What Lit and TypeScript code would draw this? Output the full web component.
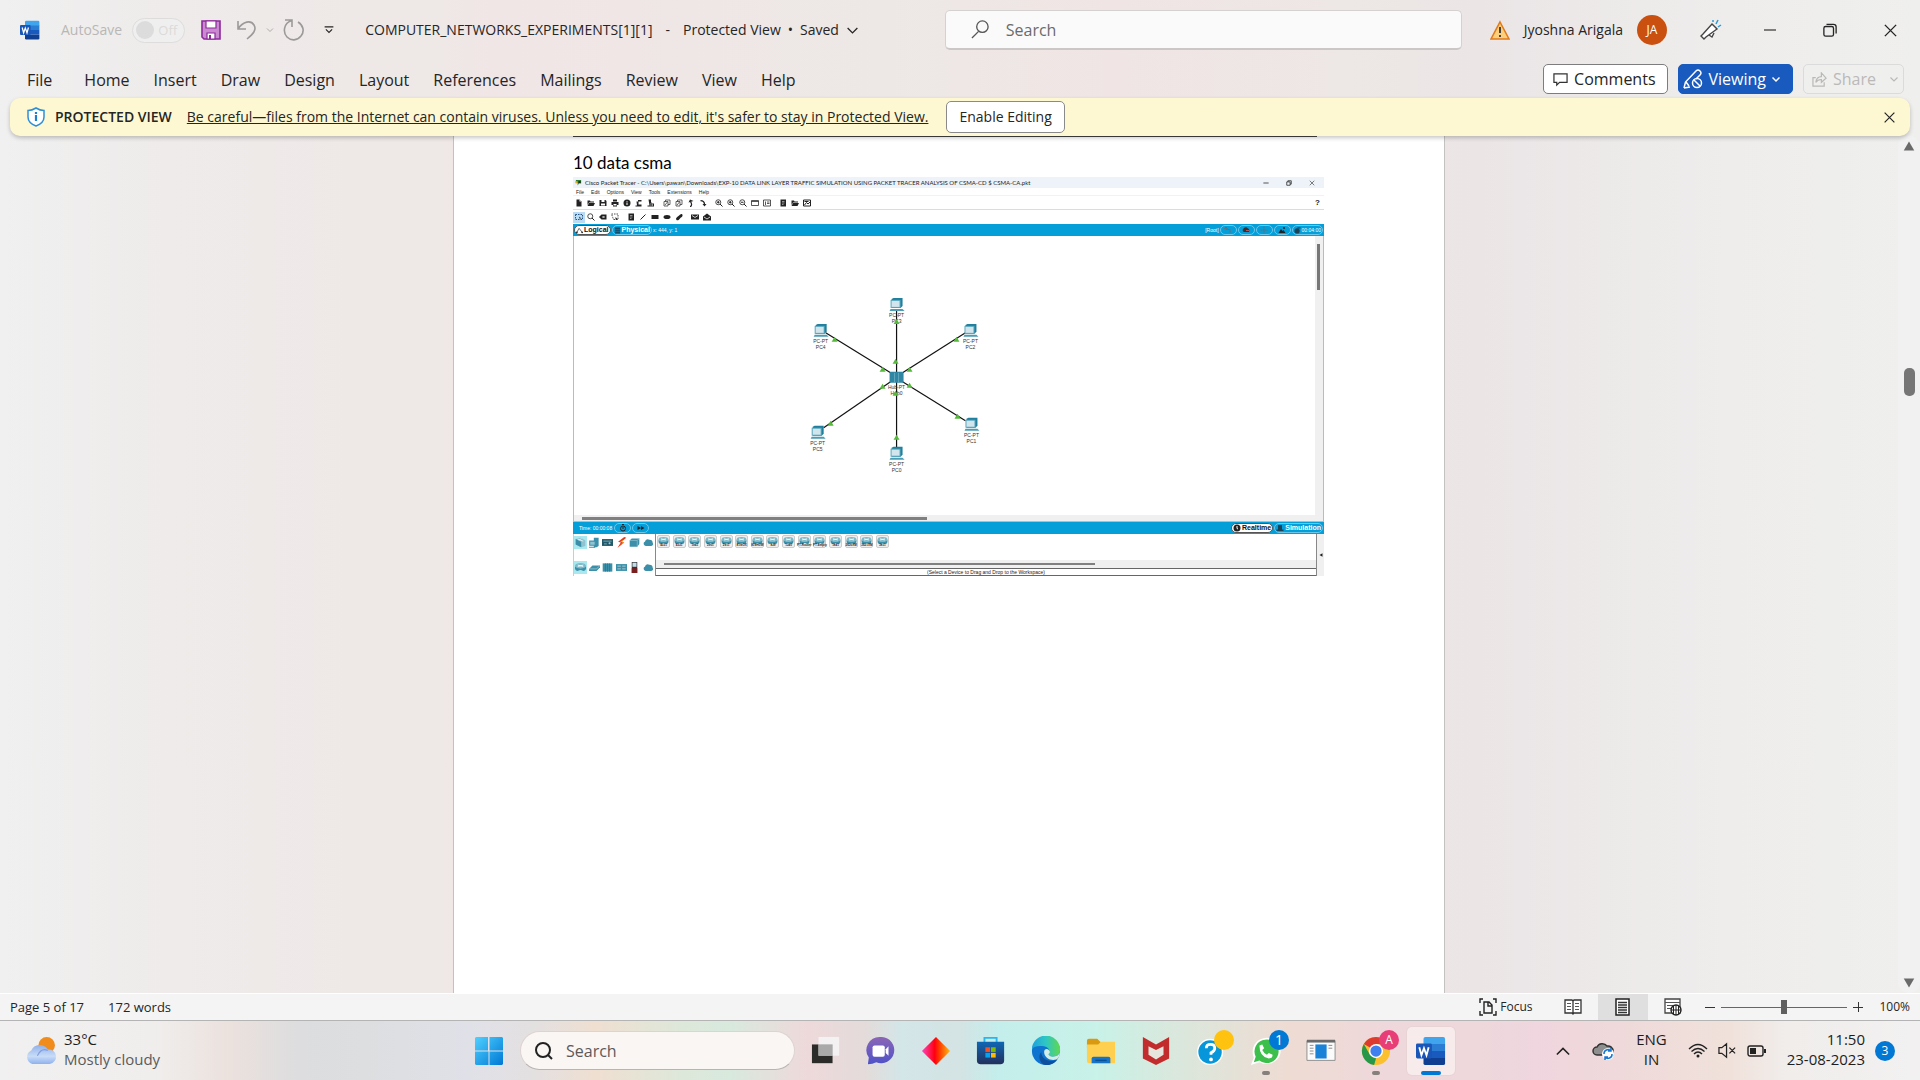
import { LitElement, html, svg, css, TemplateResult, SVGTemplateResult } from "lit";
import { customElement } from "lit/decorators.js";
import { classMap } from "lit/directives/class-map.js";

const icon = (size: number, box: number, body: SVGTemplateResult): TemplateResult =>
  html`<svg class="ic" width=${size} height=${size} viewBox="0 0 ${box} ${box}" aria-hidden="true">${body}</svg>`;

const reset = css`
  * { box-sizing: border-box; }
  button, input { font: inherit; color: inherit; border: 0; background: none; padding: 0; margin: 0; }
  button { display: inline-flex; align-items: center; justify-content: center; white-space: nowrap; }
  a { color: inherit; }
  .ic { display: block; flex: none; fill: none; stroke: none; }
`;

const wordLogo = svg`
  <path fill="#41a5ee" d="M10 1h19q2 0 2 2v6H8V3q0-2 2-2z"/>
  <path fill="#2b7cd3" d="M8 8.500h23V16H8z"/><path fill="#185abd" d="M8 16h23v7.500H8z"/>
  <path fill="#103f91" d="M8 23.500h23V29q0 2-2 2H10q-2 0-2-2z"/>
  <rect x="0" y="8" width="17" height="16" rx="1.500" fill="#1a56b8"/>
  <path d="M3.500 12l2.300 8.500L8.500 13l2.700 7.500L13.500 12" stroke="#fff" stroke-width="2"/>`;

const chevron = svg`<path d="M2 5l6 6 6-6" stroke="currentColor" stroke-width="1.600"/>`;
const cross = svg`<path d="M2 2l12 12M14 2L2 14" stroke="currentColor" stroke-width="1.500"/>`;

/* ------------------------------------------------------------------ */
/* Packet Tracer window embedded in the document                       */
/* ------------------------------------------------------------------ */

const g = {
  file: svg`<path fill="#222" d="M3 1h6l4 4v10H3z"/><path fill="#fff" d="M9 1v4h4z"/>`,
  folder: svg`<path fill="#222" d="M1 3h5l1 2h7v2H4l-3 5zM4 8h12l-3 6H1z"/>`,
  save: svg`<path fill="#222" d="M1 2h12l2 2v10H1z"/><path fill="#fff" d="M5 2h6v4H5zM4 9h8v4H4z"/>`,
  print: svg`<path fill="#222" d="M4 1h8v4H4zM1 6h14v6h-3v3H4v-3H1z"/><path fill="#fff" d="M5 10h6v3H5z"/>`,
  info: svg`<circle cx="8" cy="8" r="7" fill="#222"/><path stroke="#fff" stroke-width="2" d="M8 7v5M8 4v1.500"/>`,
  user: svg`<path fill="#222" d="M6 2h7v3H6zM3 5h4v6h6v4H1v-2h3z"/>`,
  users: svg`<path fill="#222" d="M3 1h5v5l2 3h4v6H1v-2h4z"/><path stroke="#fff" d="M8 8v6M11 10v4"/>`,
  copy: svg`<path stroke="#333" stroke-width="1.500" d="M2 5h8v9H2zM5 5V2h9v9h-4M4 12l5-6"/>`,
  undo: svg`<path stroke="#222" stroke-width="2.500" d="M6 15c4 0 4-6 1-10"/><path fill="#222" d="M3 7l3-6 7 3z"/>`,
  redo: svg`<path stroke="#222" stroke-width="2.500" d="M3 3c6 0 8 3 8 8"/><path fill="#222" d="M7 10h8l-4 5z"/>`,
  zoomIn: svg`<circle cx="6.500" cy="6.500" r="5" stroke="#222" stroke-width="1.600"/><path stroke="#222" stroke-width="2" d="M10 10l5 5M4 6.500h5M6.500 4v5"/>`,
  zoomOut: svg`<circle cx="6.500" cy="6.500" r="5" stroke="#222" stroke-width="1.600"/><path stroke="#222" stroke-width="2" d="M10 10l5 5M4 6.500h5"/>`,
  find: svg`<circle cx="6.500" cy="6.500" r="5" stroke="#222" stroke-width="1.600"/><path stroke="#222" stroke-width="2" d="M10 10l5 5"/>`,
  rect: svg`<path stroke="#222" stroke-width="1.500" d="M1 3h14v10H1zM1 5h14"/>`,
  list: svg`<path stroke="#222" stroke-width="1.500" d="M1 2h14v12H1zM5 5v7M8 6h5M8 9h5"/>`,
  doc: svg`<path fill="#222" d="M3 1h11v14H3z"/><path stroke="#fff" d="M6 5h5M6 8h5M6 11h3"/>`,
  chart: svg`<path stroke="#222" stroke-width="2" d="M1 2h14v12H1z"/><path stroke="#222" stroke-width="2" d="M3 12l4-5 3 3 4-4M3 5h8"/>`,
  select: svg`<path stroke="#1b4a7a" stroke-width="1.800" stroke-dasharray="3 2" d="M1 3h14v10H1z"/><path fill="#222" d="M8 7l5 4H9z"/>`,
  lasso: svg`<path stroke="#222" stroke-width="1.600" stroke-dasharray="3 2" d="M1 2h13v11H5z"/><path fill="#222" d="M9 8l5 5H9z"/>`,
  del: svg`<path fill="#222" d="M0 8l5-5h10v10H5z"/><path stroke="#fff" stroke-width="1.500" d="M7 6l4 4M11 6l-4 4"/>`,
  line: svg`<path stroke="#222" stroke-width="2" d="M3 13L13 3"/>`,
  box: svg`<path fill="#222" d="M1 4h14v8H1z"/>`,
  oval: svg`<ellipse cx="8" cy="8" rx="7" ry="4" fill="#222"/>`,
  blob: svg`<path fill="#222" d="M3 14c-3-4 2-6 4-8s7-7 8-2-4 5-5 7-5 5-7 3z"/>`,
  mail: svg`<path fill="#222" d="M0 3h16v10H0z"/><path stroke="#fff" stroke-width="1.500" d="M2 5l6 4 6-4"/>`,
  openMail: svg`<path fill="#222" d="M0 7l8-6 8 6v8H0z"/><path stroke="#fff" stroke-width="1.500" d="M2 8l6 4 6-4"/>`,
};

const teal = "#3c8fa9";
const router = svg`<path fill=${teal} d="M0 6q8 6 16 0v4q-1 3-4 3-4-3-8 0-3 0-4-3z"/><ellipse cx="8" cy="5.500" rx="8" ry="4" fill="#7db9c9"/><path stroke="#fff" stroke-width="1.200" d="M4 4.500l8 2M12 4.500l-8 2"/>`;
const kinds = [
  svg`<path fill="#8fc3d2" d="M1 3l7-2 7 4v8l-6 2-8-4z"/><path fill=${teal} d="M1 3l8 4v8l-8-4z"/><path stroke="#fff" d="M4 3l8 3M9 2L6 5"/>`,
  svg`<path fill=${teal} d="M7 1h7v12l-3 2H7z"/><path fill="#8fc3d2" d="M1 6h8v6H1z"/><path stroke=${teal} stroke-width="1.500" d="M1 6h8v6H1zM0 15h9"/>`,
  svg`<path fill="#23586b" d="M0 3h16v10H0z"/><path stroke="#9cc" d="M2 6h12M3 10h4"/><circle cx="11" cy="9" r="1.500" fill="#9cc"/>`,
  svg`<path fill="#e33b1e" d="M12 0L3 7l4 1-5 8 10-8-4-1 7-6z"/><path fill="#f5a623" d="M11 4l-5 3 4 1-4 4 6-4-3-1z"/>`,
  svg`<path fill=${teal} d="M1 5l3-3h11v8l-3 4H1z"/><path stroke="#8fc3d2" d="M1 5h11v9M12 5l3-3"/>`,
  svg`<path fill=${teal} d="M4 13a4 3.500 0 0 1-1-6.500A4 4 0 0 1 9 4a4 4 0 0 1 5 4q2 4-2 5z"/>`,
];
const kinds2 = [
  router,
  svg`<path fill=${teal} d="M0 10l5-5h11v3l-5 5H0z"/><path stroke="#a6cfdb" d="M0 10h11l5-5"/>`,
  svg`<path fill=${teal} d="M1 2h14v12H1z"/><path stroke="#2a6f87" d="M5 2v12M8 2v12M11 2v12"/>`,
  svg`<path fill=${teal} d="M0 3h16v10H0z"/><path stroke="#cfe6ec" d="M2 6h5M9 6h5M2 10h5M9 10h5"/>`,
  svg`<path fill="#333" d="M4 0h8v16H4z"/><path fill="#bfe0ea" d="M5 1h6v6H5z"/><path fill="#7a1f1f" d="M4 9h8v7H4z"/>`,
  kinds[5],
];

type Node = { name: string; kind: string; x: number; y: number };
const hub = { x: 323, y: 142 };
const pcs: Node[] = [
  { name: "PC3", kind: "PC-PT", x: 323, y: 69 },
  { name: "PC4", kind: "PC-PT", x: 247, y: 95 },
  { name: "PC2", kind: "PC-PT", x: 397, y: 95 },
  { name: "PC5", kind: "PC-PT", x: 244, y: 197 },
  { name: "PC1", kind: "PC-PT", x: 398, y: 189 },
  { name: "PC0", kind: "PC-PT", x: 323, y: 218 },
];
const links = [
  [323, 75, 323, 137], [252, 97, 317, 137], [392, 97, 329, 137],
  [250, 192, 317, 146], [392, 185, 329, 146], [323, 212, 323, 146],
];
const lights = [
  [323, 86], [322, 126], [261, 104], [309, 134], [383, 104], [336, 134],
  [257, 188], [309, 151], [384, 181], [336, 150], [322, 158], [323, 202],
];

@customElement("packet-tracer")
export class PacketTracer extends LitElement {
  static styles = [reset, css`
    :host { display: block; color: #222; font: 5px/8px "Liberation Sans", Arial, sans-serif; background: #fff; }
    .row { display: flex; align-items: center; }
    .grow { flex: 1; }
    .title { height: 11px; background: #edf3f9; padding: 0 9px 0 2px; gap: 3px; font-family: Lato, sans-serif; font-size: 6px; }
    .winbtns { display: flex; gap: 17px; }
    .menu { height: 8px; padding: 0 3px; gap: 7px; border-bottom: 1px solid #f2f2f2; }
    .tools { height: 14px; padding: 0 4px 0 0; gap: 4px; border-bottom: 1px solid #dcdcdc; }
    .tools.second { border-bottom: 0; }
    .group { display: flex; }
    .group button { width: 12px; height: 11px; }
    .group .on { background: #b9dcf4; }
    .help { font: bold 8px/10px "Liberation Sans", sans-serif; }
    .blue { height: 12px; background: #049fd9; color: #fff; padding: 0 1px; gap: 1px; }
    .pill { height: 10px; min-width: 17px; border: 1px solid #6cc6ea; border-radius: 5px; padding: 0 1px; gap: 1px; }
    .pill.solid { background: #fff; color: #111; border-color: #555; }
    .tab { font: bold 7px/8px "Liberation Sans", sans-serif; }
    .work { display: grid; grid-template-columns: 1fr 8px; border-left: 1px solid #bbb; border-right: 1px solid #bbb; }
    .canvas { width: 100%; height: auto; display: block; }
    .vbar { background: #f0f0f0; padding: 8px 2px; }
    .vthumb { height: 46px; width: 3px; background: #777; }
    .hbar { height: 7px; background: #f0f0f0; padding: 2px 8px; border: 0 solid #bbb; border-width: 0 1px 1px; }
    .hthumb { height: 3px; width: 47%; background: #808080; }
    .time { padding: 0 1px 0 5px; }
    .bottom { display: grid; grid-template-columns: 82px 1fr 7px; height: 42px; background: #f0f0f0; }
    .kinds { display: flex; flex-direction: column; justify-content: space-between; border-left: 1px solid #ccc; background: #fff; padding: 2px 0; }
    .kinds div { display: flex; justify-content: space-between; }
    .kinds button { width: 13px; height: 13px; }
    .kinds .on { background: #a9e8ee; }
    .devs { display: flex; flex-direction: column; border: 1px solid #888; border-width: 0 1px 0 1px; background: #fff; }
    .list { display: flex; justify-content: space-between; padding: 1px; flex: 1; align-items: flex-start; max-width: 234px; }
    .dev { flex-direction: column; justify-content: flex-start; width: 13px; height: 13px; border: 1px solid #ccc; border-radius: 2px; background: #eee; font: bold 3px/3px "Liberation Sans", sans-serif; }
    .dbar { height: 8px; background: #f0f0f0; padding: 3px 8px; }
    .dthumb { height: 2px; width: 67%; background: #808080; }
    .hint { border: 1px solid #666; border-width: 1px 0; height: 8px; line-height: 6px; text-align: center; }
    .side { display: grid; place-items: center; }
  `];

  private pc(n: Node) {
    return svg`<g>
      <path fill="#1f7f9c" d="M${n.x - 5} ${n.y - 6}l2-1h9v8l-2 2h-9z"/>
      <path fill="#5aa7bd" d="M${n.x - 6} ${n.y - 5}h10v8h-10z"/>
      <path fill="#d3e5ec" d="M${n.x - 5} ${n.y - 4}h8v6h-8z"/>
      <path fill="#4b9db5" d="M${n.x - 6} ${n.y + 4}h12l2 2h-15z"/>
      <text x=${n.x} y=${n.y + 12} text-anchor="middle">${n.kind}</text>
      <text x=${n.x} y=${n.y + 18} text-anchor="middle">${n.name}</text></g>`;
  }

  render() {
    const btn = (b: SVGTemplateResult, label: string, on = false) =>
      html`<button class=${classMap({ on })} aria-label=${label}>${icon(8, 16, b)}</button>`;
    return html`
      <div class="row title">
        ${icon(7, 16, svg`<path fill="#2e7d32" d="M2 2h12v8H9l-3 5V9H2z"/><path fill="#e4b024" d="M1 5h5v5H1z"/><path fill="#222" d="M8 5h5v4H8z"/>`)}
        <span class="grow">Cisco Packet Tracer - C:\\Users\\pawan\\Downloads\\EXP-10 DATA LINK LAYER TRAFFIC SIMULATION USING PACKET TRACER ANALYSIS OF CSMA-CD $ CSMA-CA.pkt</span>
        <span class="winbtns">
          ${icon(6, 16, svg`<path stroke="#222" stroke-width="2" d="M1 8h14"/>`)}
          ${icon(6, 16, svg`<path stroke="#222" stroke-width="2" d="M2 5h9v9H2zM5 5V2h9v9h-3"/>`)}
          ${icon(6, 16, cross)}
        </span>
      </div>
      <div class="row menu">${["File", "Edit", "Options", "View", "Tools", "Extensions", "Help"].map(t => html`<button>${t}</button>`)}</div>
      <div class="row tools">
        <div class="group">${btn(g.file, "New")}${btn(g.folder, "Open")}${btn(g.save, "Save")}${btn(g.print, "Print")}${btn(g.info, "Activity")}${btn(g.user, "User")}${btn(g.users, "Users")}</div>
        <div class="group">${btn(g.copy, "Copy")}${btn(g.copy, "Paste")}${btn(g.undo, "Undo")}${btn(g.redo, "Redo")}</div>
        <div class="group">${btn(g.zoomIn, "Zoom in")}${btn(g.zoomIn, "Zoom reset")}${btn(g.zoomOut, "Zoom out")}${btn(g.rect, "Viewport")}${btn(g.list, "Workspace list")}</div>
        <div class="group">${btn(g.doc, "Log")}${btn(g.folder, "Devices")}${btn(g.chart, "Chart")}</div>
        <span class="grow"></span><button class="help">?</button>
      </div>
      <div class="row tools second">
        <div class="group">${btn(g.select, "Select", true)}${btn(g.find, "Inspect")}${btn(g.del, "Delete")}${btn(g.lasso, "Resize")}</div>
        <div class="group">${btn(g.doc, "Note")}${btn(g.line, "Line")}${btn(g.box, "Rectangle")}${btn(g.oval, "Ellipse")}${btn(g.blob, "Freeform")}</div>
        <div class="group">${btn(g.mail, "Simple PDU")}${btn(g.openMail, "Complex PDU")}</div>
      </div>
      <div class="row blue">
        <button class="pill solid tab">${icon(7, 16, svg`<path stroke="#222" stroke-width="1.500" d="M2 12l5-9 7 9"/><circle cx="2" cy="12" r="2" fill="#222"/><circle cx="14" cy="12" r="2" fill="#222"/>`)}Logical</button>
        <button class="pill tab">${icon(7, 16, svg`<path fill="#14506e" d="M2 1h12v14H2z"/><path stroke="#049fd9" d="M2 6h12M2 10h12"/>`)}Physical</button>
        <span>x: 444, y: 1</span><span class="grow"></span><span>[Root]</span>
        <button class="pill" aria-label="Back">${icon(8, 16, svg`<path stroke="#7d6466" stroke-width="2" d="M4 2v5h8v6M1 6l3-4 3 4"/>`)}</button>
        <button class="pill" aria-label="New cluster">${icon(8, 16, svg`<path fill="#333" d="M4 12a4 4 0 0 1-1-7q5-5 9 0 4 2 2 7z"/><path stroke="#b55" stroke-width="2" d="M8 9h6"/>`)}</button>
        <button class="pill" aria-label="Move object">${icon(8, 16, svg`<path stroke="#7d6466" stroke-width="2" stroke-dasharray="3 1" d="M8 1v14M1 8h14"/>`)}</button>
        <button class="pill" aria-label="Set background">${icon(8, 16, svg`<path fill="#222" d="M1 14l5-8 3 4 2-2 4 6z"/><circle cx="12" cy="4" r="2" fill="#222"/>`)}</button>
        <button class="pill">${icon(7, 16, svg`<circle cx="7" cy="9" r="6" fill="#1c4257"/><path stroke="#222" stroke-width="2" d="M8 2h7"/>`)}00:04:00</button>
      </div>
      <div class="work">
        <svg class="canvas" viewBox="0 0 742 279" role="img" aria-label="Hub topology">
          <g stroke="#111" stroke-width="1.200">${links.map(l => svg`<line x1=${l[0]} y1=${l[1]} x2=${l[2]} y2=${l[3]}/>`)}</g>
          <g font-size="5" fill="#333">
            ${pcs.map(n => this.pc(n))}
            <path fill="#2f86a3" d="M${hub.x - 6} ${hub.y - 6}h12l1 1v10h-14v-10z"/>
            <path stroke="#62a8be" d="M${hub.x - 2} ${hub.y - 5}v10M${hub.x + 2} ${hub.y - 5}v10"/>
            <text x=${hub.x} y="153" text-anchor="middle">Hub-PT</text>
            <text x=${hub.x} y="159" text-anchor="middle">Hub0</text>
          </g>
          ${lights.map(l => svg`<path fill="#56b93b" d="M${l[0]} ${l[1] - 3}l3 5h-6z"/>`)}
        </svg>
        <div class="vbar"><div class="vthumb"></div></div>
      </div>
      <div class="hbar"><div class="hthumb"></div></div>
      <div class="row blue">
        <span class="time">Time: 00:00:08</span>
        <button class="pill" aria-label="Power cycle">${icon(8, 16, svg`<circle cx="8" cy="9" r="5" stroke="#222" stroke-width="2"/><path stroke="#222" stroke-width="2" d="M8 6v4M6 1h4"/>`)}</button>
        <button class="pill" aria-label="Fast forward">${icon(8, 16, svg`<path fill="#222" d="M1 4l7 4-7 4zM8 4l7 4-7 4z"/>`)}</button>
        <span class="grow"></span>
        <button class="pill solid tab">${icon(8, 16, svg`<circle cx="8" cy="8" r="7" fill="#222"/><path stroke="#fff" stroke-width="2" d="M8 4v5l2 1"/>`)}Realtime</button>
        <button class="pill tab">${icon(8, 16, svg`<path fill="#1c4257" d="M4 2h8v9h3v3H1v-3h3z"/>`)}Simulation</button>
      </div>
      <div class="bottom">
        <div class="kinds">
          <div>${kinds.map((k, i) => html`<button class=${classMap({ on: i === 0 })} aria-label="Category ${i + 1}">${icon(11, 16, k)}</button>`)}</div>
          <div>${kinds2.map((k, i) => html`<button class=${classMap({ on: i === 0 })} aria-label="Type ${i + 1}">${icon(11, 16, k)}</button>`)}</div>
        </div>
        <div class="devs">
          <div class="list">${["4331", "4321", "1941", "2901", "2911", "819IOX", "819HGW", "829", "1240", "PT-Router", "PT-Empty", "1841", "2620XM", "2621XM", "2811"]
            .map(d => html`<button class="dev"><svg class="ic" width="11" height="8" viewBox="0 0 16 13" aria-hidden="true">${router}</svg><span>${d}</span></button>`)}</div>
          <div class="dbar"><div class="dthumb"></div></div>
          <div class="hint">(Select a Device to Drag and Drop to the Workspace)</div>
        </div>
        <div class="side">${icon(4, 16, svg`<path fill="#222" d="M14 1v14L2 8z"/>`)}</div>
      </div>`;
  }
}

/* ------------------------------------------------------------------ */
/* Windows taskbar                                                     */
/* ------------------------------------------------------------------ */

const apps: { name: string; body: SVGTemplateResult; state?: string; badge?: string; tone?: string }[] = [
  { name: "Task view", body: svg`<path fill="#2b2b29" d="M1 9h22v20H1z"/><path fill="#f4f4f4" fill-opacity=".85" d="M8 1h22v20H8z"/><path fill="#a9a9a9" d="M8 9h15v12H8z"/>` },
  { name: "Chat", body: svg`<defs><linearGradient id="ch" x1="0" y1="0" x2="0" y2="1"><stop stop-color="#8b65b5"/><stop offset="1" stop-color="#4f52c9"/></linearGradient></defs><path fill="url(#ch)" d="M15 1h2a14 14 0 1 1-6 27q-4 2-9 2l1-7A14 14 0 0 1 15 1z"/><rect x="7" y="10" width="13" height="12" rx="2" fill="#fff"/><path fill="#fff" d="M21 14l3-3v10l-3-3z"/>` },
  { name: "Diamond", body: svg`<defs><linearGradient id="dm"><stop stop-color="#f4b"/><stop offset=".45" stop-color="#f01"/><stop offset=".6" stop-color="#f30"/><stop offset="1" stop-color="#fb1"/></linearGradient></defs><path fill="url(#dm)" d="M16 1l15 15-15 15L1 16z"/>` },
  { name: "Microsoft Store", body: svg`<defs><linearGradient id="st" x1="0" y1="0" x2="0" y2="1"><stop stop-color="#0f67b5"/><stop offset="1" stop-color="#24305c"/></linearGradient></defs><path d="M9 7V2h13v5" stroke="#29b6f0" stroke-width="2"/><path fill="url(#st)" d="M1 6h29v20q0 4-4 4H5q-4 0-4-4z"/><path fill="#f25022" d="M10 12h5v5h-5z"/><path fill="#7fba00" d="M16 12h5v5h-5z"/><path fill="#00a4ef" d="M10 18h5v5h-5z"/><path fill="#ffb900" d="M16 18h5v5h-5z"/>` },
  { name: "Edge", body: svg`<defs><linearGradient id="e1"><stop stop-color="#1fa2dc"/><stop offset=".5" stop-color="#2fc6c4"/><stop offset="1" stop-color="#5fd84f"/></linearGradient></defs><circle cx="16" cy="16" r="15" fill="#0f74cf"/><path fill="url(#e1)" d="M1 14A15 15 0 0 1 31 15c0 5-4 7-8 7-3 0-5-1-4-3 2-3 0-7-5-8C8 10 3 11 1 14z"/><path fill="#0e4f9e" d="M11 17c0 8 9 12 17 8-3 5-8 6-12 6-7-1-9-10-5-14z"/><path fill="#d3ece6" d="M14 17c0-3 3-4 5-2s1 3 0 4 1 3 4 3c4 0 7-2 8-5 0 4-2 7-4 8-6 2-13-2-13-8z"/>` },
  { name: "File Explorer", body: svg`<path fill="#d99a12" d="M1 5q0-2 2-2h9l4 4v6H1z"/><path fill="#ffd04f" d="M1 9h12l3-3h15v23H3q-2 0-2-2z"/><path fill="#1673c8" d="M6 29v-5q0-2 2-2h16q2 0 2 2v5z"/><path stroke="#0b4f94" stroke-width="1.500" d="M10 26h12"/>` },
  { name: "McAfee", body: svg`<path fill="#c22c2c" d="M2 1l14 8 14-8v23l-14 7-14-7z"/><path fill="#e6e6df" d="M8 11l8 4 8-4v9l-8 5-8-5z"/>` },
  { name: "Help", tone: "amber", badge: "", body: svg`<circle cx="15" cy="17" r="14" fill="#fff"/><circle cx="15" cy="17" r="12.500" fill="#0796d9"/><path d="M11 13q0-4 4.500-4T20 13q0 3-4 5v2" stroke="#fff" stroke-width="3"/><circle cx="16" cy="25" r="2" fill="#fff"/>` },
  { name: "WhatsApp", tone: "blue", badge: "1", state: "open", body: svg`<path fill="#fff" d="M15 2a15 14 0 1 1-6 26l-9 3 3-8A15 15 0 0 1 15 2z"/><path fill="#3cc04b" d="M15 4a12.500 12.500 0 1 1-6 22l-6 2 2-6A12.500 12.500 0 0 1 15 4z"/><path fill="#fff" d="M9 10l3-1 2 4-2 2q2 4 5 5l2-2 4 2q0 4-4 4Q9 22 9 10z"/>` },
  { name: "Window", body: svg`<path fill="#fbfbfb" stroke="#8c8c8c" d="M1 5h30v21H1z"/><path fill="#6b6b6b" d="M1 4h30v3H1z"/><path fill="#1a83d8" d="M10 9h12v15H10z"/><path stroke="#888" d="M4 10h4M4 13h4M4 16h4M4 19h4M24 10h4M24 13h4"/>` },
  { name: "Chrome", tone: "pink", badge: "A", state: "open", body: svg`<circle cx="16" cy="16" r="15" fill="#fbc02d"/><path fill="#dd3b2e" d="M16 16L3 8.500A15 15 0 0 1 29 8.500H16z"/><path fill="#27984a" d="M3 8.500L9.500 20 16 24l-2 7A15 15 0 0 1 3 8.500z"/><circle cx="16" cy="16" r="7.500" fill="#fff"/><circle cx="16" cy="16" r="6" fill="#3f7fee"/>` },
  { name: "Word", state: "active", body: wordLogo },
];

@customElement("task-bar")
export class TaskBar extends LitElement {
  static styles = [reset, css`
    :host { display: grid; grid-template-columns: minmax(0, 1fr) auto minmax(0, 1fr); align-items: center; height: 59px;
      font: 15px/20px "Open Sans", sans-serif; color: #1d1d1d;
      background: linear-gradient(90deg, #f1f0f0 0%, #f0eeed 8%, #ebe1dd 12%, #dddddf 15.500%, #dcdee0 19%, #e0e1e8 24.500%, #e4e0e0 28%, #efdfd1 31%, #dde8da 35.500%, #d8e9dd 38%, #eed9da 42%, #e4dbda 45%, #d3e6e8 47%, #d4e3e4 50%, #c3eeeb 52%, #c8f2e8 57%, #d9e8dd 61%, #eedcd3 67%, #eed8db 72%, #eed8db 77%, #efd6df 80%, #efd9da 84%, #f0e1da 90%, #f0edeb 93%, #f2f1f1 100%); }
    .weather { justify-self: start; display: flex; align-items: center; gap: 7px; padding-left: 24px; text-align: left; }
    .muted { color: #5b5b5b; }
    .mid { display: flex; align-items: center; gap: 7px; }
    .cell { position: relative; width: 48px; height: 48px; border-radius: 5px; }
    .cell.active { background: #f7ebeb; box-shadow: 0 0 0 1px #e8d3d5; }
    .cell.open::after, .cell.active::after { content: ""; position: absolute; bottom: 0; left: 20px; width: 8px; height: 4px; border-radius: 2px; background: #85807c; }
    .cell.active::after { left: 14px; width: 20px; background: #0078d4; }
    .badge { position: absolute; right: 1px; top: 3px; width: 20px; height: 20px; border-radius: 50%; font: 14px/20px "Open Sans", sans-serif; color: #fff; }
    .badge.amber { background: #ffc20e; } .badge.blue { background: #0078d4; } .badge.pink { background: #e83e78; font-size: 12px; }
    .search { display: flex; align-items: center; gap: 13px; width: 275px; height: 39px; border: 1px solid #ddd3d1; border-bottom-color: #b9b4b2; border-radius: 20px; background: #faf6f4; padding: 0 14px; }
    .search input { flex: 1; min-width: 0; font-size: 16px; outline: 0; }
    .search input::placeholder { color: #5a5a5a; opacity: 1; }
    .tray { justify-self: end; display: flex; align-items: center; padding-right: 25px; gap: 10px; }
    .tray .wide { width: 30px; }
    .stack { display: flex; flex-direction: column; align-items: center; padding-bottom: 3px; }
    .stack.start { align-items: flex-start; }
    .stack.end { align-items: flex-end; }
    .lang { padding-left: 8px; padding-right: 11px; }
    .clock { padding-left: 10px; }
    .count { width: 20px; height: 20px; border-radius: 50%; background: #0078d4; color: #fff; font-size: 12px; }
  `];

  render() {
    return html`
      <button class="weather">
        ${icon(33, 32, svg`<defs><linearGradient id="cl" x1="0" y1="0" x2="0" y2="1"><stop stop-color="#8fb0ea"/><stop offset=".6" stop-color="#c9dcf8"/><stop offset="1" stop-color="#8fb2ee"/></linearGradient></defs><circle cx="22" cy="11" r="8" fill="#f08c1c"/><path fill="url(#cl)" d="M8 29a7 7 0 0 1-1-13 9 9 0 0 1 16-1 7 7 0 0 1 2 14z"/><path d="M13 21q4-8 10-5" stroke="#7f9fdc"/>`)}
        <span class="stack start"><span>33°C</span><span class="muted">Mostly cloudy</span></span>
      </button>
      <div class="mid">
        <button class="cell" aria-label="Start">${icon(30, 30, svg`<defs><linearGradient id="w" x1="0" y1="0" x2="1" y2="1"><stop stop-color="#4fd0ff"/><stop offset="1" stop-color="#0078d4"/></linearGradient></defs><path fill="url(#w)" d="M2 1h12v13.500H1V2zM15.500 1H28l1 1v12.500H15.500zM1 15.500h13.500V29H2l-1-1zM15.500 15.500H29V28l-1 1H15.500z"/>`)}</button>
        <label class="search">${icon(18, 18, svg`<circle cx="8" cy="8" r="7" stroke="#222" stroke-width="2"/><path stroke="#222" stroke-width="2" d="M13 13l4 4"/>`)}
          <input type="text" placeholder="Search" aria-label="Search"></label>
        ${apps.map(a => html`<button class="cell ${a.state ?? ""}" aria-label=${a.name}>${icon(30, 32, a.body)}${a.badge === undefined ? "" : html`<span class="badge ${a.tone ?? ""}">${a.badge}</span>`}</button>`)}
      </div>
      <div class="tray">
        <button class="wide" aria-label="Hidden icons">${icon(14, 16, svg`<path stroke="#222" stroke-width="1.800" d="M1 12l7-7 7 7"/>`)}</button>
        <button class="wide" aria-label="OneDrive">${icon(22, 22, svg`<path fill="#8f8f8f" stroke="#333" stroke-width="1.500" d="M5 15a4 4 0 0 1 0-8 6 6 0 0 1 10-1 5 5 0 0 1 6 5v4z"/><circle cx="16" cy="14" r="6" fill="#fff"/><path stroke="#1778d2" stroke-width="1.500" d="M12 14a4 4 0 0 1 7-3M20 14a4 4 0 0 1-7 3M19 8v3h-3M13 20v-3h3"/>`)}</button>
        <button class="stack lang"><span>ENG</span><span>IN</span></button>
        ${icon(20, 20, svg`<path stroke="#222" stroke-width="1.400" d="M1 8q9-9 18 0M3.500 10.500q6.500-6 13 0M6 13q4-4 8 0"/><circle cx="10" cy="15" r="1.500" fill="#222"/>`)}
        ${icon(19, 20, svg`<path stroke="#222" stroke-width="1.300" d="M1 7h3l5-4v14l-5-4H1zM12 7l6 6M18 7l-6 6"/>`)}
        ${icon(20, 20, svg`<rect x="1" y="5" width="15" height="10" rx="2" stroke="#222" stroke-width="1.400"/><path fill="#222" d="M3 7h6v6H3zM17 8h2v4h-2z"/>`)}
        <button class="stack end clock"><span>11:50</span><span>23-08-2023</span></button>
        <button class="count">3</button>
      </div>`;
  }
}

/* ------------------------------------------------------------------ */
/* Word window                                                         */
/* ------------------------------------------------------------------ */

@customElement("app-root")
export class AppRoot extends LitElement {
  static styles = [reset, css`
    :host { display: flex; flex-direction: column; height: 100vh; overflow: hidden; color: #252525; font: 14px/20px "Open Sans", sans-serif;
      background: linear-gradient(90deg, #f0f0f0 0%, #eeebea 9%, #eee8e6 23%, #f0e6e5 26%, #ede8e6 46%, #f0e5e4 58%, #ede7e5 70%, #ebe5e6 77%, #eeedec 90%, #efefee 100%); }
    .row { display: flex; align-items: center; }
    .top { display: grid; grid-template-columns: minmax(0, 1fr) 517px auto; align-items: center; height: 60px; flex: none; }
    .left { gap: 16px; padding-left: 20px; white-space: nowrap; }
    .auto { display: flex; align-items: center; gap: 10px; padding-left: 5px; color: #b9b7b6; }
    .switch { display: flex; align-items: center; width: 53px; height: 25px; border: 1px solid #dedddc; border-radius: 13px; background: #efefef; padding: 0 7px 0 3px; justify-content: space-between; color: #dcdad9; font-size: 13px; }
    .switch input { appearance: none; width: 18px; height: 18px; border-radius: 50%; background: #dddcdc; }
    .hist { display: flex; align-items: center; gap: 9px; color: #9b9999; }
    .custom { padding: 0 15px 0 3px; }
    .doc { display: flex; align-items: center; gap: 13px; }
    .saved { display: flex; align-items: center; gap: 7px; }
    .find { display: flex; align-items: center; gap: 16px; height: 40px; border: 1px solid #d5d1d0; border-bottom: 2px solid #cbc7c7; border-radius: 5px; background: #fafafa; padding: 0 25px; }
    .find input { flex: 1; min-width: 0; font-size: 16px; outline: 0; }
    .find input::placeholder { color: #6b6b6b; opacity: 1; }
    .right { padding-left: 28px; gap: 14px; }
    .avatar { width: 30px; height: 30px; border-radius: 50%; background: #ca5010; color: #fff; font-size: 12px; }
    .wins { display: flex; }
    .wins button { width: 60px; height: 40px; }
    .pen { padding: 0 4px 0 19px; }
    .ribbon { height: 38px; flex: none; padding: 0 16px; font-size: 16px; justify-content: space-between; }
    .tabs { display: flex; gap: 2px; }
    .tabs button { padding: 2px 11px 0; height: 34px; }
    .tabs button:first-child { margin-right: 8px; }
    .acts { display: flex; gap: 10px; }
    .acts button { height: 30px; border-radius: 5px; border: 1px solid #7d7d7d; background: #fff; padding: 0 11px 0 9px; gap: 6px; }
    .acts .view { background: #185abd; border-color: #185abd; color: #fff; padding: 0 12px 0 4px; }
    .acts .share { background: #efefee; border-color: #dcdbdb; color: #bbb9b8; padding: 0 5px 0 8px; }
    .share .split { padding-left: 8px; }
    .notice { flex: none; height: 38px; margin: 0 10px; padding: 0 14px 0 16px; gap: 9px; border-radius: 10px; background: #fdf8d2; box-shadow: 0 2px 4px rgba(0, 0, 0, .22); position: relative; z-index: 1; white-space: nowrap; }
    .notice strong { font-weight: 600; }
    .notice a { margin: 0 9px 0 6px; }
    .enable { height: 32px; border: 1px solid #8a8a8a; border-radius: 5px; background: #fff; padding: 0 12px; }
    .grow { flex: 1; }
    .body { flex: 1; min-height: 0; display: grid; grid-template-columns: minmax(0, 1fr) 22px; border-bottom: 1px solid #fff; }
    .page { justify-self: center; width: 992px; max-width: 100%; height: 100%; background: #fff; border: 1px solid #c4c2c1; border-width: 0 1px; padding: 0 120px 0 119px; font: 17px/24px Lato, sans-serif; color: #000; overflow: hidden; }
    .cut { height: 1px; margin: 0 7px 0 0; border: 0; background: #444; }
    .page p { margin: 0; padding: 14px 0 2px; }
    .scroll { display: flex; flex-direction: column; align-items: center; background: #f2f1f1; border-radius: 10px; padding: 4px 0; color: #6a6a6a; }
    .thumb { width: 11px; height: 28px; border-radius: 5px; background: #767676; }
    .up { flex: 217; } .down { flex: 583; }
    .status { flex: none; height: 27px; background: #f4f4f4; border-bottom: 1px solid #b4b4b4; padding: 0 10px; font-size: 12px; }
    .info { display: flex; gap: 24px; font-size: 13px; }
    .status .focus { gap: 3px; padding-right: 16px; }
    .status .mode { width: 50px; height: 26px; }
    .mode.on { background: #dfdfdf; }
    .zoom { display: flex; align-items: center; gap: 6px; padding: 0 16px 0 7px; }
    .zoom button { width: 10px; height: 20px; }
    .zoom input { appearance: none; width: 126px; height: 14px; background: linear-gradient(#666, #666) center / 100% 1px no-repeat; }
    .zoom input::-webkit-slider-thumb { appearance: none; width: 6px; height: 14px; background: #5f5f5f; }
  `];

  render() {
    return html`
      <header class="top">
        <div class="row left">
          ${icon(20, 32, wordLogo)}
          <label class="auto">AutoSave<span class="switch"><input type="checkbox" role="switch" disabled><span>Off</span></span></label>
          <button aria-label="Save">${icon(20, 20, svg`<path fill="#c98ad0" stroke="#8d2a9c" stroke-width="1.600" d="M1 1h18v18H3l-2-2z"/><path fill="#fff" stroke="#8d2a9c" stroke-width="1.200" d="M5 1h10v7H5zM6 13h8v6H6z"/><path fill="#8d2a9c" d="M8 15h2v4H8z"/>`)}</button>
          <span class="hist">
            <button aria-label="Undo">${icon(20, 20, svg`<path stroke="currentColor" stroke-width="1.600" d="M1 1v8h8M1 9C6 1 14 0 17 5s-1 9-7 14"/>`)}</button>
            ${icon(8, 16, chevron)}
            <button aria-label="Redo">${icon(22, 22, svg`<path stroke="currentColor" stroke-width="1.600" d="M2 1h7v7M9 1.500C0 4 0 14 4 18s10 4 14-1 2-11-3-14"/>`)}</button>
          </span>
          <button class="custom" aria-label="Customize toolbar">${icon(10, 16, svg`<path stroke="currentColor" stroke-width="1.800" d="M1 3h14M3 7l5 5 5-5"/>`)}</button>
          <button class="doc"><span>COMPUTER_NETWORKS_EXPERIMENTS[1][1]</span><span>-</span><span class="saved"><span>Protected View</span><span>•</span><span>Saved</span>${icon(13, 16, chevron)}</span></button>
        </div>
        <label class="find">${icon(19, 20, svg`<circle cx="12" cy="7" r="6" stroke="#555" stroke-width="1.400"/><path stroke="#555" stroke-width="1.400" d="M8 12l-7 7"/>`)}
          <input type="text" placeholder="Search" aria-label="Search document"></label>
        <div class="row right">
          ${icon(20, 20, svg`<path fill="#fbcf7c" stroke="#e07b1c" stroke-width="1.600" d="M10 2l9 17H1z"/><path stroke="#333" stroke-width="1.800" d="M10 7v6M10 15v2"/>`)}
          <span>Jyoshna Arigala</span>
          <button class="avatar">JA</button>
          <button class="pen" aria-label="What's new">${icon(22, 22, svg`<path fill="#fff" stroke="#444" stroke-width="1.400" d="M12 5l5 5-11 8-2 2-3-3 2-2zM9 16l3 2 2-4"/><path stroke="#2b9bd8" stroke-width="1.500" d="M13 3V1M16 5l2-4M18 8l3-2"/>`)}</button>
          <div class="wins">
            <button aria-label="Minimize">${icon(12, 16, svg`<path stroke="currentColor" stroke-width="1.500" d="M0 8h16"/>`)}</button>
            <button aria-label="Restore">${icon(14, 16, svg`<rect x="1" y="4" width="11" height="11" rx="2" stroke="currentColor" stroke-width="1.500"/><path stroke="currentColor" stroke-width="1.500" d="M4 1.500h8q3 0 3 3V12"/>`)}</button>
            <button aria-label="Close">${icon(15, 16, cross)}</button>
          </div>
        </div>
      </header>
      <nav class="row ribbon">
        <div class="tabs">${["File", "Home", "Insert", "Draw", "Design", "Layout", "References", "Mailings", "Review", "View", "Help"].map(t => html`<button>${t}</button>`)}</div>
        <div class="acts">
          <button>${icon(15, 16, svg`<path stroke="#333" stroke-width="1.300" d="M1 2h14v9H7l-3 3v-3H1z"/>`)}Comments</button>
          <button class="view">${icon(20, 20, svg`<path stroke="#fff" stroke-width="1.500" d="M1 19l1.500-6L13 2q2-2 4 0t0 4l-4 4M7 18l-6 1M3 13l3 4"/><circle cx="14" cy="14" r="4.500" stroke="#fff" stroke-width="1.500"/><path stroke="#fff" stroke-width="1.500" d="M11 11l6 6"/>`)}Viewing${icon(8, 16, svg`<path d="M1 5l7 7 7-7" stroke="#fff" stroke-width="3"/>`)}</button>
          <button class="share" disabled>${icon(15, 16, svg`<path stroke="currentColor" stroke-width="1.300" d="M4 6H1v9h12v-4M4 11q1-6 6-6V1l5 5.500-5 4.500V8q-4 0-6 3z"/>`)}Share<span class="split">${icon(8, 16, svg`<path d="M1 5l7 7 7-7" stroke="currentColor" stroke-width="2.400"/>`)}</span></button>
        </div>
      </nav>
      <section class="row notice">
        ${icon(20, 20, svg`<path fill="#fff" stroke="#2f8fd6" stroke-width="1.500" d="M10 1q4 2.500 8 2.500V10q0 6-8 9-8-3-8-9V3.500Q6 3.500 10 1z"/><path stroke="#1c7fd0" stroke-width="2.200" d="M10 8v6M10 5v2"/>`)}
        <strong>PROTECTED VIEW</strong>
        <a href="#protected">Be careful—files from the Internet can contain viruses. Unless you need to edit, it's safer to stay in Protected View.</a>
        <button class="enable">Enable Editing</button>
        <span class="grow"></span>
        <button aria-label="Dismiss">${icon(13, 16, cross)}</button>
      </section>
      <main class="body">
        <article class="page"><hr class="cut"><p>10 data csma</p><packet-tracer></packet-tracer></article>
        <div class="scroll">
          ${icon(12, 16, svg`<path fill="currentColor" d="M8 2l7 12H1z"/>`)}<span class="up"></span>
          <span class="thumb"></span><span class="down"></span>
          ${icon(12, 16, svg`<path fill="currentColor" d="M8 14l7-12H1z"/>`)}
        </div>
      </main>
      <footer class="row status">
        <span class="info"><button>Page 5 of 17</button><button>172 words</button></span><span class="grow"></span>
        <button class="focus">${icon(18, 18, svg`<path stroke="#222" stroke-width="1.400" d="M1 5V1h3M14 1h3v4M1 13v4h3M14 17h3v-4M5 4h5l3 3v8H5zM9 4v4h4"/>`)}Focus</button>
        <button class="mode" aria-label="Read mode">${icon(18, 18, svg`<path fill="#fff" stroke="#333" stroke-width="1.300" d="M1 2h7l1 1 1-1h7v13h-7l-1 1-1-1H1zM9 3v13"/><path stroke="#555" d="M3 5.500h4M3 8.500h4M3 11.500h4M11 5.500h4M11 8.500h4M11 11.500h4"/>`)}</button>
        <button class="mode on" aria-label="Print layout">${icon(18, 18, svg`<path fill="#fff" stroke="#222" stroke-width="1.500" d="M2 1h13v16H2z"/><path stroke="#333" stroke-width="1.300" d="M4 4.500h9M4 7h9M4 9.500h9M4 12h9M4 14.500h9"/>`)}</button>
        <button class="mode" aria-label="Web layout">${icon(18, 18, svg`<path fill="#fff" stroke="#444" stroke-width="1.300" d="M1 1h15v14H1z"/><path stroke="#555" d="M1 4.500h15M3 7.500h6M3 10.500h4"/><circle cx="12" cy="12" r="5" fill="#fff" stroke="#222" stroke-width="1.400"/><path stroke="#222" d="M7 12h10M12 7v10M9.500 8v8M14.500 8v8"/>`)}</button>
        <span class="zoom">
          <button aria-label="Zoom out">${icon(10, 10, svg`<path stroke="#333" d="M0 5.500h10"/>`)}</button>
          <input type="range" min="0" max="100" value="50" aria-label="Zoom">
          <button aria-label="Zoom in">${icon(10, 10, svg`<path stroke="#333" d="M0 5.500h10M5.500 0v10"/>`)}</button>
        </span>
        <button>100%</button>
      </footer>
      <task-bar></task-bar>`;
  }
}
